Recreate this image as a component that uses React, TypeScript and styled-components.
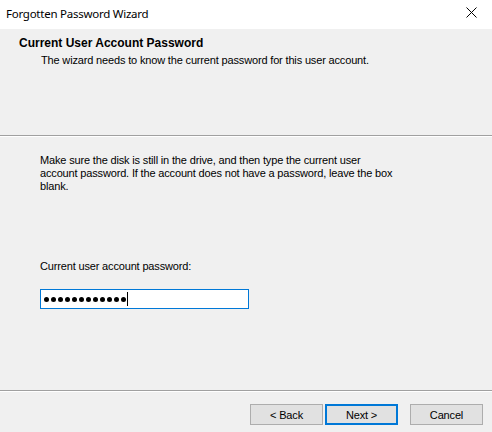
import React from 'react'
import styled, { createGlobalStyle } from 'styled-components'

const GlobalStyle = createGlobalStyle`
  html, body {
    margin: 0;
    padding: 0;
    background: #f0f0f0;
  }
  #root {
    width: 492px;
    height: 432px;
  }
`

const Window = styled.div`
  width: 492px;
  height: 432px;
  display: flex;
  flex-direction: column;
  background: #f0f0f0;
  font-family: 'Liberation Sans', Arial, sans-serif;
  font-size: 11px;
  letter-spacing: -0.16px;
  color: #000;
  overflow: hidden;
`

const TitleBar = styled.div`
  height: 29px;
  flex: none;
  display: flex;
  align-items: center;
  justify-content: space-between;
  background: #fff;
  padding-left: 6px;
`

const TitleText = styled.span`
  font-family: 'Noto Sans', 'Open Sans', sans-serif;
  font-size: 11.5px;
  letter-spacing: -0.25px;
  margin-top: -2px;
`

const CloseButton = styled.button`
  width: 46px;
  height: 29px;
  border: none;
  background: transparent;
  display: flex;
  align-items: center;
  justify-content: center;
  padding: 0;
  margin-top: -4px;
  margin-right: -2px;
`

const Header = styled.div`
  height: 106px;
  flex: none;
  padding: 8px 0 0 19px;
  box-sizing: border-box;
`

const HeaderTitle = styled.div`
  font-weight: bold;
  font-size: 12px;
  line-height: 13px;
  letter-spacing: 0;
`

const HeaderSubtitle = styled.div`
  line-height: 13px;
  margin-top: 4px;
  padding-left: 22px;
`

const Separator = styled.div`
  height: 1px;
  flex: none;
  background: #a0a0a0;
  border-bottom: 1px solid #fff;
`

const Body = styled.div`
  flex: 1;
  padding: 17px 0 0 40px;
`

const Paragraph = styled.p`
  margin: 0;
  line-height: 13px;
  white-space: nowrap;
`

const Label = styled.div`
  margin-top: 67px;
  line-height: 13px;
`

const Field = styled.div`
  margin-top: 16px;
  width: 209px;
  height: 20px;
  box-sizing: border-box;
  border: 1px solid #0078d7;
  background: #fff;
  display: flex;
  align-items: center;
  padding-left: 3px;
`

const Dot = styled.span`
  width: 5px;
  height: 5px;
  border-radius: 50%;
  background: #000;
  margin-right: 2px;
  flex: none;
`

const Caret = styled.span`
  width: 1px;
  height: 14px;
  background: #000;
  margin-left: -1px;
`

const Footer = styled.div`
  height: 40px;
  flex: none;
  display: flex;
  align-items: flex-start;
  padding: 12px 0 0 250px;
  box-sizing: border-box;
`

const Button = styled.button<{ isDefault?: boolean; gapLeft?: number }>`
  width: 73px;
  height: 21px;
  box-sizing: border-box;
  margin-left: ${({ gapLeft }) => gapLeft ?? 0}px;
  border: ${({ isDefault }) => (isDefault ? '2px solid #0078d7' : '1px solid #adadad')};
  background: #e1e1e1;
  font-family: 'Liberation Sans', Arial, sans-serif;
  font-size: 11px;
  letter-spacing: -0.16px;
  color: #000;
  padding: 0;
`

const CloseIcon = () => (
  <svg width="11" height="11" viewBox="0 0 11 11">
    <path d="M0.5 0.5 L10.5 10.5 M10.5 0.5 L0.5 10.5" stroke="#000" strokeWidth="1" fill="none" />
  </svg>
)

export default function App() {
  return (
    <>
      <GlobalStyle />
      <Window>
        <TitleBar>
          <TitleText>Forgotten Password Wizard</TitleText>
          <CloseButton aria-label="Close">
            <CloseIcon />
          </CloseButton>
        </TitleBar>
        <Header>
          <HeaderTitle>Current User Account Password</HeaderTitle>
          <HeaderSubtitle>The wizard needs to know the current password for this user account.</HeaderSubtitle>
        </Header>
        <Separator />
        <Body>
          <Paragraph>
            Make sure the disk is still in the drive, and then type the current user
            <br />
            account password. If the account does not have a password, leave the box
            <br />
            blank.
          </Paragraph>
          <Label>Current user account password:</Label>
          <Field>
            {Array.from({ length: 12 }).map((_, i) => (
              <Dot key={i} />
            ))}
            <Caret />
          </Field>
        </Body>
        <Separator />
        <Footer>
          <Button>&lt; Back</Button>
          <Button isDefault gapLeft={2}>
            Next &gt;
          </Button>
          <Button gapLeft={12}>Cancel</Button>
        </Footer>
      </Window>
    </>
  )
}
